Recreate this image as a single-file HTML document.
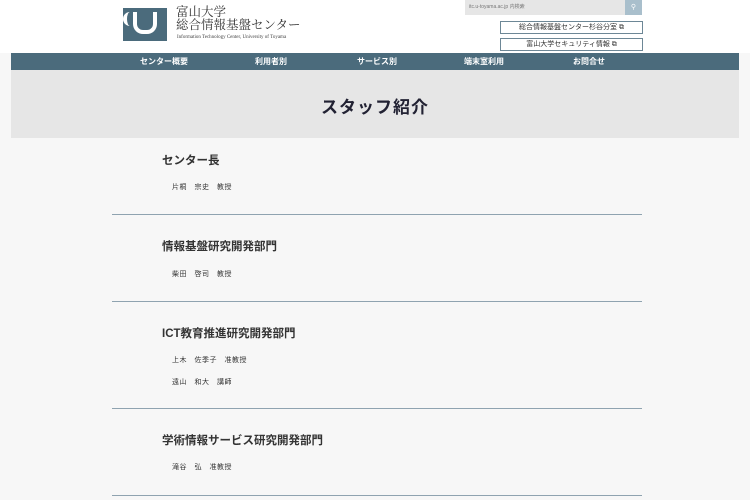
<html><head><style>
body{margin:0;width:750px;height:500px;overflow:hidden;background:#f7f7f7;font-family:"Liberation Sans","Noto Sans CJK JP",sans-serif;position:relative}
.a{position:absolute}
.hd{left:0;top:0;width:750px;height:53px;background:#fff}
.nav{left:11px;top:53px;width:728px;height:17px;background:#4b6b7c;color:#fff;font-size:8px;font-weight:bold}
.nav span{position:absolute;top:3px}
.band{left:11px;top:70px;width:728px;height:68px;background:#e6e6e6}
h1{position:absolute;left:0;width:750px;top:93px;margin:0;text-align:center;font-size:17px;font-weight:bold;color:#223;letter-spacing:1px}
.h{left:162px;font-size:11.5px;font-weight:bold;color:#333;letter-spacing:0}
.n{left:172px;font-size:7px;color:#333;letter-spacing:.5px}
.l{left:112px;width:530px;height:1px;background:#8fa3b0}
.btn{left:500px;width:141px;height:11px;border:1px solid #6d8796;font-size:7px;text-align:center;line-height:11px;color:#333;background:#fff}
</style></head><body>
<div class="a hd"></div>
<div class="a" style="left:123px;top:8px;width:44px;height:33px;background:#4b6b7c"></div>
<div class="a" style="left:133px;top:12px;width:24px;height:22px;border:4px solid #fff;border-top:none;border-radius:0 0 10px 10px;box-sizing:border-box"></div>
<div class="a" style="left:123px;top:12px;width:8px;height:14px;border-left:4px solid #fff;border-radius:10px 0 0 10px;box-sizing:border-box"></div>
<div class="a" style="left:176px;top:6px;font-family:'Liberation Serif','Noto Serif CJK SC',serif;font-size:12.5px;line-height:12.5px;color:#333">富山大学<br>総合情報基盤センター</div>
<div class="a" style="left:177px;top:35px;font-family:'Liberation Serif',serif;font-size:5px;color:#444">Information Technology Center, University of Toyama</div>
<div class="a" style="left:465px;top:0;width:160px;height:15px;background:#e6e6e6;font-size:5px;color:#777;line-height:15px;text-indent:4px">itc.u-toyama.ac.jp 内検索</div>
<div class="a" style="left:625px;top:0;width:17px;height:15px;background:#a9bfcc;color:#fff;font-size:7px;text-align:center;line-height:15px">⚲</div>
<div class="a btn" style="top:21px">総合情報基盤センター杉谷分室 ⧉</div>
<div class="a btn" style="top:38px">富山大学セキュリティ情報 ⧉</div>
<div class="a nav"><span style="left:129px">センター概要</span><span style="left:244px">利用者別</span><span style="left:346px">サービス別</span><span style="left:453px">端末室利用</span><span style="left:562px">お問合せ</span></div>
<div class="a band"></div>
<h1>スタッフ紹介</h1>
<div class="a h" style="top:152px">センター長</div>
<div class="a n" style="top:182px">片桐　宗史　教授</div>
<div class="a l" style="top:214px"></div>
<div class="a h" style="top:238px">情報基盤研究開発部門</div>
<div class="a n" style="top:269px">柴田　啓司　教授</div>
<div class="a l" style="top:301px"></div>
<div class="a h" style="top:325px">ICT教育推進研究開発部門</div>
<div class="a n" style="top:355px">上木　佐季子　准教授</div>
<div class="a n" style="top:377px">遠山　和大　講師</div>
<div class="a l" style="top:408px"></div>
<div class="a h" style="top:432px">学術情報サービス研究開発部門</div>
<div class="a n" style="top:462px">滝谷　弘　准教授</div>
<div class="a l" style="top:495px"></div>
</body></html>
